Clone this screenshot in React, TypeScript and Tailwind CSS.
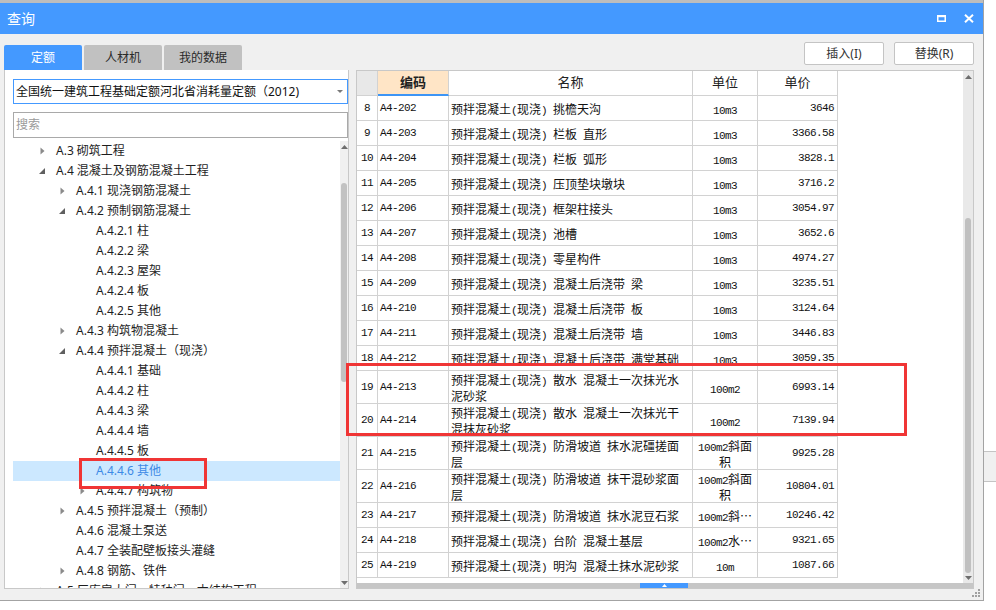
import React from "react";

type TreeItem = [number, "c" | "e" | null, string, boolean?];

const tree: TreeItem[] = [
  [1, "c", "A.3 砌筑工程"],
  [1, "e", "A.4 混凝土及钢筋混凝土工程"],
  [2, "c", "A.4.1 现浇钢筋混凝土"],
  [2, "e", "A.4.2 预制钢筋混凝土"],
  [3, null, "A.4.2.1 柱"],
  [3, null, "A.4.2.2 梁"],
  [3, null, "A.4.2.3 屋架"],
  [3, null, "A.4.2.4 板"],
  [3, null, "A.4.2.5 其他"],
  [2, "c", "A.4.3 构筑物混凝土"],
  [2, "e", "A.4.4 预拌混凝土（现浇）"],
  [3, null, "A.4.4.1 基础"],
  [3, null, "A.4.4.2 柱"],
  [3, null, "A.4.4.3 梁"],
  [3, null, "A.4.4.4 墙"],
  [3, null, "A.4.4.5 板"],
  [3, null, "A.4.4.6 其他", true],
  [3, "c", "A.4.4.7 构筑物"],
  [2, "c", "A.4.5 预拌混凝土（预制）"],
  [2, null, "A.4.6 混凝土泵送"],
  [2, null, "A.4.7 全装配壁板接头灌缝"],
  [2, "c", "A.4.8 钢筋、铁件"],
  [1, "c", "A.5 厂库房大门、特种门、木结构工程"],
];

type Row = { n: number; c: string; name: string[]; unit: string[]; p: string };

const rows: Row[] = [
  { n: 8, c: "A4-202", name: ["预拌混凝土(现浇) 挑檐天沟"], unit: ["10m3"], p: "3646" },
  { n: 9, c: "A4-203", name: ["预拌混凝土(现浇) 栏板 直形"], unit: ["10m3"], p: "3366.58" },
  { n: 10, c: "A4-204", name: ["预拌混凝土(现浇) 栏板 弧形"], unit: ["10m3"], p: "3828.1" },
  { n: 11, c: "A4-205", name: ["预拌混凝土(现浇) 压顶垫块墩块"], unit: ["10m3"], p: "3716.2" },
  { n: 12, c: "A4-206", name: ["预拌混凝土(现浇) 框架柱接头"], unit: ["10m3"], p: "3054.97" },
  { n: 13, c: "A4-207", name: ["预拌混凝土(现浇) 池槽"], unit: ["10m3"], p: "3652.6" },
  { n: 14, c: "A4-208", name: ["预拌混凝土(现浇) 零星构件"], unit: ["10m3"], p: "4974.27" },
  { n: 15, c: "A4-209", name: ["预拌混凝土(现浇) 混凝土后浇带 梁"], unit: ["10m3"], p: "3235.51" },
  { n: 16, c: "A4-210", name: ["预拌混凝土(现浇) 混凝土后浇带 板"], unit: ["10m3"], p: "3124.64" },
  { n: 17, c: "A4-211", name: ["预拌混凝土(现浇) 混凝土后浇带 墙"], unit: ["10m3"], p: "3446.83" },
  { n: 18, c: "A4-212", name: ["预拌混凝土(现浇) 混凝土后浇带 满堂基础"], unit: ["10m3"], p: "3059.35" },
  { n: 19, c: "A4-213", name: ["预拌混凝土(现浇) 散水 混凝土一次抹光水", "泥砂浆"], unit: ["100m2"], p: "6993.14" },
  { n: 20, c: "A4-214", name: ["预拌混凝土(现浇) 散水 混凝土一次抹光干", "混抹灰砂浆"], unit: ["100m2"], p: "7139.94" },
  { n: 21, c: "A4-215", name: ["预拌混凝土(现浇) 防滑坡道 抹水泥礓搓面", "层"], unit: ["100m2斜面", "积"], p: "9925.28" },
  { n: 22, c: "A4-216", name: ["预拌混凝土(现浇) 防滑坡道 抹干混砂浆面", "层"], unit: ["100m2斜面", "积"], p: "10804.01" },
  { n: 23, c: "A4-217", name: ["预拌混凝土(现浇) 防滑坡道 抹水泥豆石浆"], unit: ["100m2斜…"], p: "10246.42" },
  { n: 24, c: "A4-218", name: ["预拌混凝土(现浇) 台阶 混凝土基层"], unit: ["100m2水…"], p: "9321.65" },
  { n: 25, c: "A4-219", name: ["预拌混凝土(现浇) 明沟 混凝土抹水泥砂浆"], unit: ["10m"], p: "1087.66" },
];

function Mixed({ t }: { t: string }) {
  const parts = t.split(/([\x20-\x7E]+)/).filter((p) => p !== "");
  return (
    <>
      {parts.map((p, i) =>
        /^[\x20-\x7E]+$/.test(p) ? (
          <span
            key={i}
            className="inline-block h-[16px] leading-[16px] font-['Liberation_Mono',monospace] text-[11px] tracking-[-0.6px] whitespace-pre"
          >
            {p}
          </span>
        ) : (
          <span
            key={i}
            className="inline-block h-[16px] leading-[16px] font-['Noto_Sans_CJK_SC',sans-serif] text-[12px] whitespace-pre"
          >
            {p}
          </span>
        )
      )}
    </>
  );
}

function Arrow({ kind }: { kind: "c" | "e" | null }) {
  if (kind === "c")
    return (
      <svg width="5" height="8" viewBox="0 0 5 8">
        <path d="M0.5 0.5 L4.5 4 L0.5 7.5 Z" fill="#8a8a8a" />
      </svg>
    );
  if (kind === "e")
    return (
      <svg width="6" height="6" viewBox="0 0 6 6">
        <path d="M6 0 L6 6 L0 6 Z" fill="#5f5f5f" />
      </svg>
    );
  return null;
}

const levelPad: Record<number, string> = { 1: "pl-[24px]", 2: "pl-[44px]", 3: "pl-[64px]" };

function TreeRow({ item }: { item: TreeItem }) {
  const [lvl, kind, text, sel] = item;
  return (
    <div
      className={`h-[20px] shrink-0 flex items-center ${levelPad[lvl]} ${sel ? "bg-[#cce8ff] text-[#3d8ae6]" : "text-[#1e1e1e]"}`}
    >
      <div className="w-[10px] flex justify-center items-center">
        <Arrow kind={kind} />
      </div>
      <span className="ml-[9px] text-[12px] leading-[20px] whitespace-nowrap">{text}</span>
    </div>
  );
}

const B = "border-[#d2d2d2]";

function TableRow({ r }: { r: Row }) {
  const tall = r.n >= 19 && r.n <= 22;
  return (
    <div className={`w-[481px] shrink-0 flex border-b ${B} ${tall ? "h-[33px]" : "h-[25px]"} text-[#111] leading-[16px]`}>
      <div className={`w-[21px] border-r ${B} flex items-center justify-center`}>
        <Mixed t={String(r.n)} />
      </div>
      <div className={`w-[71px] border-r ${B} flex items-center pl-[2px]`}>
        <Mixed t={r.c} />
      </div>
      <div className={`w-[244px] border-r ${B} flex flex-col justify-center pl-[2px]`}>
        {r.name.map((l, i) => (
          <div key={i} className="h-[16px] whitespace-nowrap">
            <Mixed t={l} />
          </div>
        ))}
      </div>
      <div className={`w-[65px] border-r ${B} flex flex-col justify-center items-center`}>
        {r.unit.map((l, i) => (
          <div key={i} className="h-[16px] whitespace-nowrap">
            <Mixed t={l} />
          </div>
        ))}
      </div>
      <div className={`w-[80px] border-r ${B} flex items-center justify-end pr-[3px]`}>
        <Mixed t={r.p} />
      </div>
    </div>
  );
}

function UpTri({ color = "#6e6e6e" }: { color?: string }) {
  return (
    <svg width="7" height="4" viewBox="0 0 7 4">
      <path d="M0 4 L3.5 0 L7 4 Z" fill={color} />
    </svg>
  );
}
function DownTri({ color = "#6e6e6e" }: { color?: string }) {
  return (
    <svg width="7" height="4" viewBox="0 0 7 4">
      <path d="M0 0 L7 0 L3.5 4 Z" fill={color} />
    </svg>
  );
}

export default function App() {
  return (
    <div className="relative w-[996px] h-[610px] bg-white overflow-hidden flex font-['Noto_Sans','Noto_Sans_CJK_SC',sans-serif]">
      {/* window */}
      <div className="relative w-[984px] h-[601px] shrink-0 flex flex-col bg-[#f0f0f0] border-r border-b border-[#a3a3a3]">
        {/* title bar */}
        <div className="h-[34px] shrink-0 border-t-[3px] border-[#bdbdbd] bg-[#4499ff] flex items-center justify-between pl-[7px] pr-[9px]">
          <span className="text-white text-[14px] leading-[20px]">查询</span>
          <div className="flex items-center gap-[18px]">
            <svg width="9" height="7" viewBox="0 0 9 7">
              <rect x="0.75" y="1" width="7.5" height="5.25" fill="none" stroke="#fff" strokeWidth="1.5" />
              <rect x="0" y="0" width="9" height="2.2" fill="#fff" />
            </svg>
            <svg width="10" height="9" viewBox="0 0 10 9">
              <path d="M1 0.8 L9 8.2 M9 0.8 L1 8.2" stroke="#fff" strokeWidth="2" />
            </svg>
          </div>
        </div>

        {/* body */}
        <div className="flex-1 flex flex-col pl-[4px] pr-[9px]">
          {/* tabs + buttons */}
          <div className="h-[36px] shrink-0 flex justify-between">
            <div className="self-end flex gap-[2px]">
              <div className="w-[78px] h-[25px] rounded-t-[2px] bg-[#4499ff] text-white text-[12px] flex items-center justify-center">
                定额
              </div>
              <div className="w-[78px] h-[25px] rounded-t-[2px] bg-[#c1c1c1] text-[#2a2a2a] text-[12px] flex items-center justify-center">
                人材机
              </div>
              <div className="w-[78px] h-[25px] rounded-t-[2px] bg-[#c1c1c1] text-[#2a2a2a] text-[12px] flex items-center justify-center">
                我的数据
              </div>
            </div>
            <div className="mt-[8px] flex gap-[10px]">
              <div className="w-[80px] h-[23px] bg-white border border-[#c4c4c4] rounded-[2px] text-[12px] text-[#333] flex items-center justify-center">
                插入(I)
              </div>
              <div className="w-[80px] h-[23px] bg-white border border-[#c4c4c4] rounded-[2px] text-[12px] text-[#333] flex items-center justify-center">
                替换(R)
              </div>
            </div>
          </div>

          {/* panels */}
          <div className="h-[519px] shrink-0 flex">
            {/* left panel */}
            <div className="w-[345px] h-full bg-white border-l border-r border-b border-[#c8c8c8] flex flex-col">
              <div className="ml-[8px] mt-[9px] w-[335px] h-[25px] shrink-0 border border-[#4499ff] flex items-center pl-[2px] pr-[4px] justify-between">
                <span className="text-[12px] text-[#111] whitespace-nowrap">全国统一建筑工程基础定额河北省消耗量定额（2012)</span>
                <svg width="6" height="3" viewBox="0 0 6 3">
                  <path d="M0 0 L6 0 L3 3 Z" fill="#7a7a7a" />
                </svg>
              </div>
              <div className="ml-[8px] mt-[8px] w-[335px] h-[26px] shrink-0 border border-[#a9a9a9] flex items-center pl-[2px]">
                <span className="text-[12px] text-[#9a9a9a]">搜索</span>
              </div>
              <div className="mt-[3px] flex-1 min-h-0 flex">
                <div className="flex-1 pl-[8px] overflow-hidden flex flex-col">
                  {tree.map((it, i) => (
                    <TreeRow key={i} item={it} />
                  ))}
                </div>
                <div className="w-[8px] bg-[#f0f0f0] flex flex-col items-center">
                  <div className="h-[11px] shrink-0 flex items-center justify-center">
                    <UpTri />
                  </div>
                  <div className="h-[31px] shrink-0" />
                  <div className="h-[199px] w-[6px] shrink-0 rounded-[3px] bg-[#c2c2c2]" />
                  <div className="flex-1" />
                  <div className="h-[11px] shrink-0 flex items-center justify-center">
                    <DownTri />
                  </div>
                </div>
              </div>
            </div>

            {/* right panel */}
            <div className="ml-[7px] w-[618px] h-full bg-white border border-[#c8c8c8] flex flex-col">
              <div className="flex-1 min-h-0 flex">
                <div className="flex-1 overflow-hidden flex flex-col">
                  {/* header */}
                  <div className="w-[481px] h-[25px] shrink-0 flex text-[13px] text-[#222]">
                    <div className={`w-[21px] border-r border-b ${B} bg-[#e8e8e8]`} />
                    <div className={`w-[71px] border-r ${B} border-b-2 border-b-[#3d95f5] bg-[#ffe5c6] flex items-center justify-center font-bold`}>
                      编码
                    </div>
                    <div className={`w-[244px] border-r border-b ${B} flex items-center justify-center`}>名称</div>
                    <div className={`w-[65px] border-r border-b ${B} flex items-center justify-center`}>单位</div>
                    <div className={`w-[80px] border-r border-b ${B} flex items-center justify-center`}>单价</div>
                  </div>
                  {rows.map((r) => (
                    <TableRow key={r.n} r={r} />
                  ))}
                </div>
                {/* vertical scrollbar */}
                <div className="w-[10px] bg-[#e9e9e9] flex flex-col items-center">
                  <div className="h-[11px] shrink-0 flex items-center justify-center">
                    <UpTri />
                  </div>
                  <div className="h-[136px] shrink-0" />
                  <div className="h-[355px] w-[6px] shrink-0 rounded-[3px] bg-[#c0c0c0]" />
                  <div className="h-[10px] shrink-0 flex items-center justify-center">
                    <DownTri />
                  </div>
                </div>
              </div>
              {/* horizontal splitter bar */}
              <div className="h-[5px] shrink-0 bg-[#c6c6c6] flex">
                <div className="w-[283px] shrink-0" />
                <div className="w-[48px] h-full bg-[#4499ff] flex items-center justify-center">
                  <svg width="5" height="3" viewBox="0 0 5 3">
                    <path d="M0 3 L2.5 0 L5 3 Z" fill="#fff" />
                  </svg>
                </div>
              </div>
            </div>
          </div>
        </div>

        {/* resize grip */}
        <svg className="absolute right-[3px] bottom-[3px]" width="8" height="8" viewBox="0 0 8 8">
          <rect x="6" y="0" width="2" height="2" fill="#a0a0a0" />
          <rect x="3" y="3" width="2" height="2" fill="#a0a0a0" />
          <rect x="6" y="3" width="2" height="2" fill="#a0a0a0" />
          <rect x="0" y="6" width="2" height="2" fill="#a0a0a0" />
          <rect x="3" y="6" width="2" height="2" fill="#a0a0a0" />
          <rect x="6" y="6" width="2" height="2" fill="#a0a0a0" />
        </svg>
      </div>

      {/* background strip right of the window */}
      <div className="flex-1 flex flex-col">
        <div className="h-[451px] shrink-0" />
        <div className="h-[31px] shrink-0 bg-[#f0f0f0] border-y border-[#c4c4c4]" />
        <div className="flex-1" />
      </div>

      {/* red annotation boxes */}
      <div className="absolute left-[346px] top-[363px] w-[561px] h-[73px] border-[3px] border-[#f03535]" />
      <div className="absolute left-[79px] top-[458px] w-[128px] h-[31px] border-[3px] border-[#f03535]" />
    </div>
  );
}
